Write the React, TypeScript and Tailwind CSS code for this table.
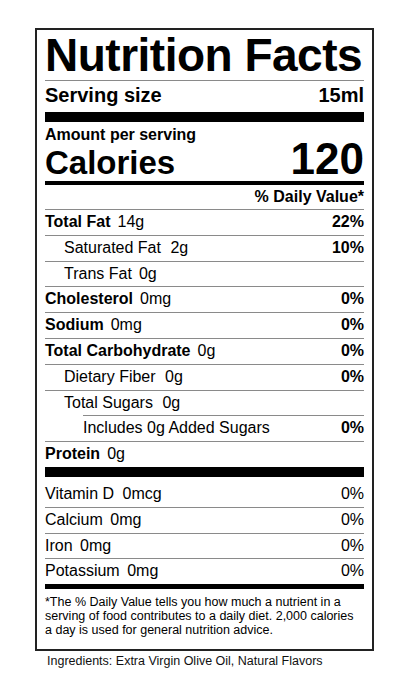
const font = { fontFamily: '"Liberation Sans", Arial, Helvetica, sans-serif' };

interface Row {
  label: string;
  amount: string;
  dv?: string;
  bold?: boolean;
  indent?: 0 | 1 | 2;
  wide?: boolean;
}

const rows: Row[] = [
  { label: "Total Fat", amount: "14g", dv: "22%", bold: true },
  { label: "Saturated Fat", amount: "2g", dv: "10%", indent: 1, wide: true },
  { label: "Trans Fat", amount: "0g", indent: 1 },
  { label: "Cholesterol", amount: "0mg", dv: "0%", bold: true },
  { label: "Sodium", amount: "0mg", dv: "0%", bold: true },
  { label: "Total Carbohydrate", amount: "0g", dv: "0%", bold: true },
  { label: "Dietary Fiber", amount: "0g", dv: "0%", indent: 1, wide: true },
  { label: "Total Sugars", amount: "0g", indent: 1, wide: true },
  { label: "Includes 0g Added Sugars", amount: "", dv: "0%", indent: 2 },
  { label: "Protein", amount: "0g", bold: true },
];

const vitamins = [
  { label: "Vitamin D", amount: "0mcg", dv: "0%" },
  { label: "Calcium", amount: "0mg", dv: "0%" },
  { label: "Iron", amount: "0mg", dv: "0%" },
  { label: "Potassium", amount: "0mg", dv: "0%" },
];

const NutrientRow = ({ row }: { row: Row }) => (
  <div className={row.indent === 2 ? "pl-[38px]" : ""}>
    <div className="border-t border-[#8a8a8a] flex justify-between text-[16px] leading-[24.8px]">
      <span className={row.indent === 1 ? "pl-[19px]" : ""}>
        {row.bold ? <b className="font-bold">{row.label}</b> : row.label}
        {row.amount && (
          <span className={row.wide ? "ml-[9.5px]" : "ml-[7px]"}>{row.amount}</span>
        )}
      </span>
      {row.dv && <b className="font-bold">{row.dv}</b>}
    </div>
  </div>
);

export default function App() {
  return (
    <div className="min-h-[694px] bg-white text-black pt-[28px]" style={font}>
      <div className="ml-[35px] w-[339px] border-2 border-[#222] px-[8px]">
        {/* Title */}
        <h1 className="border-b border-[#8a8a8a] text-[46px] leading-[50px] font-bold tracking-[-0.5px] m-0">
          Nutrition Facts
        </h1>

        {/* Serving */}
        <div className="flex justify-between text-[20px] leading-[28px] font-bold mb-[3px]">
          <span>Serving size</span>
          <span>15ml</span>
        </div>
        <div className="h-[10px] bg-black" />

        {/* Calories */}
        <div className="text-[16px] leading-[25px] font-bold">Amount per serving</div>
        <div className="flex justify-between items-baseline h-[34px] mt-[-5px] mb-[5px] font-bold leading-[34px]">
          <span className="text-[33px]">Calories</span>
          <span className="text-[44px]">120</span>
        </div>
        <div className="h-[4px] bg-black" />

        <div className="text-right text-[16px] leading-[24px] font-bold">% Daily Value*</div>

        {rows.map((r) => (
          <NutrientRow key={r.label} row={r} />
        ))}

        <div className="h-[10px] bg-black" />

        {/* Vitamins */}
        {vitamins.map((v, i) => (
          <div
            key={v.label}
            className={
              "flex justify-between text-[16px] leading-[24.8px] " +
              (i === 0 ? "pt-[5px]" : "border-t border-[#8a8a8a]")
            }
          >
            <span>
              {v.label}
              <span className={i === 0 ? "ml-[8.5px]" : "ml-[7.5px]"}>{v.amount}</span>
            </span>
            <span>{v.dv}</span>
          </div>
        ))}
        <div className="h-[5px] bg-black" />

        {/* Footnote */}
        <p className="w-[312px] text-[12.5px] leading-[14px] pt-[6px] pb-[12px] m-0">
          *The % Daily Value tells you how much a nutrient in a serving of food contributes to a daily diet. 2,000
          calories a day is used for general nutrition advice.
        </p>
      </div>

      <p className="ml-[47px] mt-[3px] text-[12.5px] leading-[14px] text-[#111]">
        Ingredients: Extra Virgin Olive Oil, Natural Flavors
      </p>
    </div>
  );
}
